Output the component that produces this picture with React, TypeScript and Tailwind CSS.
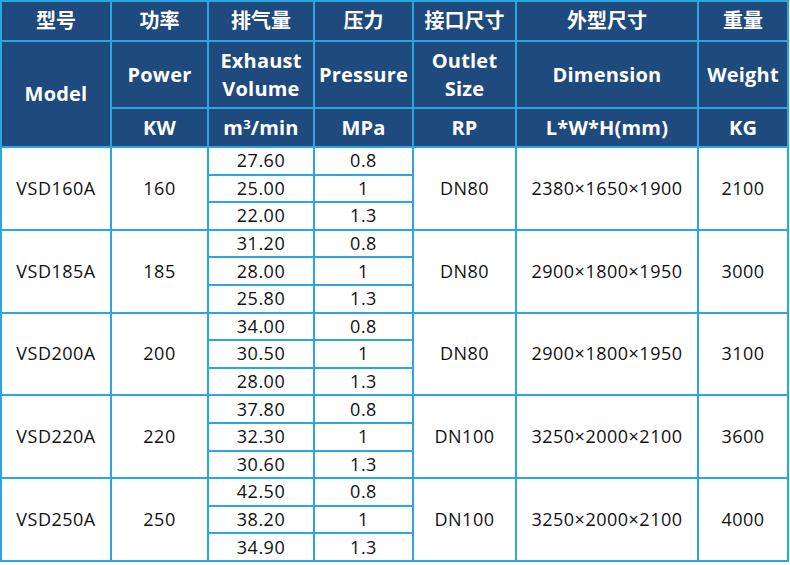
import React from "react";

type Group = {
  model: string;
  power: string;
  rows: [string, string][];
  outlet: string;
  dim: string;
  weight: string;
};

const groups: Group[] = [
  { model: "VSD160A", power: "160", rows: [["27.60", "0.8"], ["25.00", "1"], ["22.00", "1.3"]], outlet: "DN80", dim: "2380×1650×1900", weight: "2100" },
  { model: "VSD185A", power: "185", rows: [["31.20", "0.8"], ["28.00", "1"], ["25.80", "1.3"]], outlet: "DN80", dim: "2900×1800×1950", weight: "3000" },
  { model: "VSD200A", power: "200", rows: [["34.00", "0.8"], ["30.50", "1"], ["28.00", "1.3"]], outlet: "DN80", dim: "2900×1800×1950", weight: "3100" },
  { model: "VSD220A", power: "220", rows: [["37.80", "0.8"], ["32.30", "1"], ["30.60", "1.3"]], outlet: "DN100", dim: "3250×2000×2100", weight: "3600" },
  { model: "VSD250A", power: "250", rows: [["42.50", "0.8"], ["38.20", "1"], ["34.90", "1.3"]], outlet: "DN100", dim: "3250×2000×2100", weight: "4000" },
];

const head = "bg-[#1f4a7e] text-white font-bold flex items-center justify-center text-center leading-[28px]";
const cn = head + " text-[20px]";
const en = head + " text-[20px] tracking-[0.2px]";
const cell = "bg-white text-[#111] flex items-center justify-center text-[18px] tracking-[0.5px]";

export default function App() {
  return (
    <div className="w-[790px] h-[565px] bg-white" style={{ fontFamily: '"Open Sans", "Noto Sans CJK SC", sans-serif' }}>
      <div className="w-[789px] grid grid-cols-[108px_95px_104px_97px_101px_180px_1fr] grid-rows-[38px_65px_37px_repeat(15,25.6px)] gap-[2px] p-[2px] bg-[#2aa7de]">
        {/* chinese titles */}
        <div className={cn}>型号</div>
        <div className={cn}>功率</div>
        <div className={cn}>排气量</div>
        <div className={cn}>压力</div>
        <div className={cn}>接口尺寸</div>
        <div className={cn}>外型尺寸</div>
        <div className={cn}>重量</div>

        {/* english titles */}
        <div className={en + " row-span-2"}>Model</div>
        <div className={en}>Power</div>
        <div className={en}>Exhaust<br />Volume</div>
        <div className={en}>Pressure</div>
        <div className={en}>Outlet<br />Size</div>
        <div className={en}>Dimension</div>
        <div className={en}>Weight</div>

        {/* units */}
        <div className={en}>KW</div>
        <div className={en}>
          m<sup className="text-[13px] relative -top-[4px]">3</sup>/min
        </div>
        <div className={en}>MPa</div>
        <div className={en}>RP</div>
        <div className={en}>L*W*H(mm)</div>
        <div className={en}>KG</div>

        {groups.map((g) => (
          <React.Fragment key={g.model}>
            <div className={cell + " row-span-3"}>{g.model}</div>
            <div className={cell + " row-span-3"}>{g.power}</div>
            <div className={cell}>{g.rows[0][0]}</div>
            <div className={cell}>{g.rows[0][1]}</div>
            <div className={cell + " row-span-3"}>{g.outlet}</div>
            <div className={cell + " row-span-3"}>{g.dim}</div>
            <div className={cell + " row-span-3"}>{g.weight}</div>
            <div className={cell + " col-start-3"}>{g.rows[1][0]}</div>
            <div className={cell}>{g.rows[1][1]}</div>
            <div className={cell + " col-start-3"}>{g.rows[2][0]}</div>
            <div className={cell}>{g.rows[2][1]}</div>
          </React.Fragment>
        ))}
      </div>
    </div>
  );
}
